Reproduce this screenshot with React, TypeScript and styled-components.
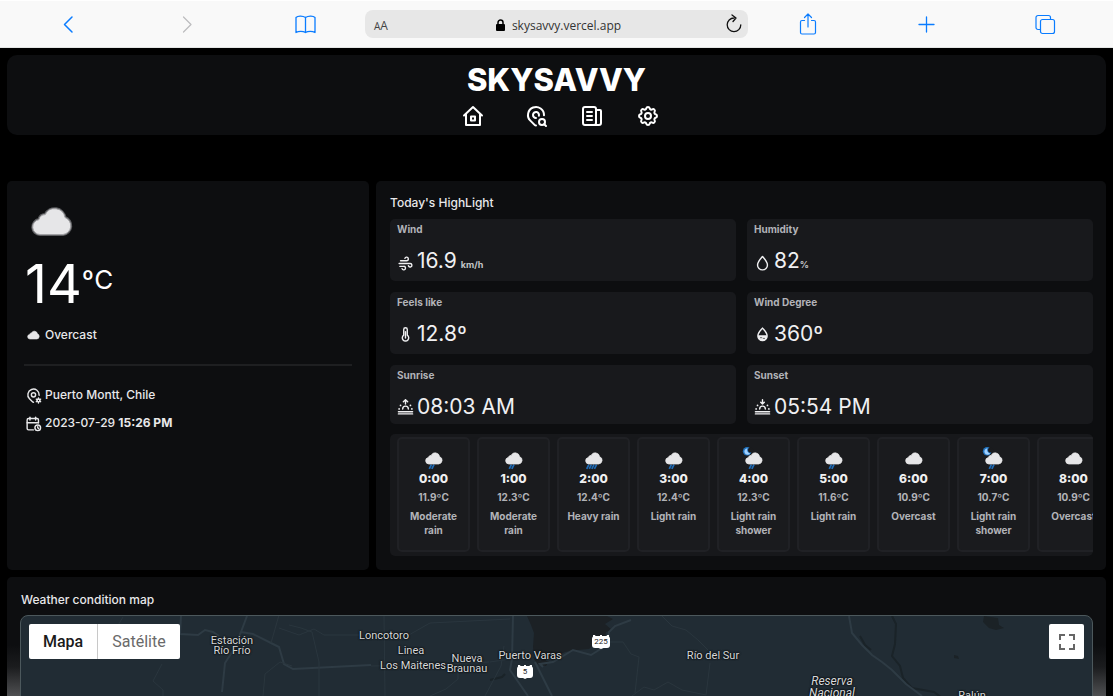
import React from "react";
import styled, { createGlobalStyle } from "styled-components";
import { TbMapPinSearch, TbSettings, TbMapPinCog, TbCalendarTime, TbWind } from "react-icons/tb";

const GlobalStyle = createGlobalStyle`
  * { box-sizing: border-box; }
  html, body, #root { height: 100%; }
  body { margin: 0; background: #000; color: #e8e8ea; font-family: Inter, "Liberation Sans", sans-serif; font-size: 12px; }
  h1, h2, h3, p, ul, ol { margin: 0; padding: 0; }
  li { list-style: none; }
  button { font: inherit; border: 0; padding: 0; background: none; cursor: pointer; }
  svg { display: block; flex: none; }
`;

const Shell = styled.div`
  display: flex;
  flex-direction: column;
  height: 100vh;
  overflow: hidden;
`;

/* ---------- browser bar ---------- */
const BrowserBar = styled.div`
  flex: none;
  display: grid;
  grid-template-columns: repeat(3, 1fr) minmax(0, 383px) repeat(3, 1fr);
  align-items: center;
  height: 48px;
  padding: 0 8px;
  background: #f9f9f9;
  border-top: 1px solid #fff;
  border-bottom: 1px solid #e4e6e5;
`;
const BarButton = styled.button<{ $muted?: boolean }>`
  display: flex;
  justify-content: center;
  color: ${(p) => (p.$muted ? "#bcbcbe" : "#0a7cff")};
`;
const AddressBox = styled.div`
  display: grid;
  grid-template-columns: 1fr auto 1fr;
  align-items: center;
  height: 28px;
  padding: 0 5px 0 9px;
  border-radius: 8px;
  background: #e7e7e7;
  color: #333;
  font-family: "Open Sans", "Noto Sans", sans-serif;
`;
const TextSize = styled.button`
  justify-self: start;
  padding-top: 2px;
  color: #444;
  font-size: 12px;
  small { font-size: 10px; }
`;
const Address = styled.span`
  display: flex;
  align-items: center;
  gap: 7px;
  padding-top: 2px;
  font-size: 12px;
`;
const Reload = styled.button`
  justify-self: end;
  color: #111;
`;

/* ---------- page ---------- */
const Page = styled.div`
  flex: 1;
  min-height: 0;
  overflow: hidden;
  padding: 7px;
`;
const Header = styled.header`
  display: flex;
  flex-direction: column;
  align-items: center;
  height: 80px;
  margin-bottom: 46px;
  padding-top: 5px;
  border-radius: 10px;
  background: #0d0e10;
`;
const Brand = styled.h1`
  font-size: 31px;
  line-height: 40px;
  font-weight: 800;
  color: #fff;
`;
const Nav = styled.nav`
  display: flex;
  align-items: center;
  gap: 32px;
  height: 24px;
  margin-top: 4px;
`;
const NavLink = styled.a<{ $pad?: number }>`
  padding: 0 ${(p) => p.$pad ?? 0}px;
  color: #fff;
`;
const Columns = styled.main`
  display: grid;
  grid-template-columns: minmax(0, 362fr) minmax(0, 730fr);
  gap: 7px;
`;
const Panel = styled.section`
  border-radius: 5px;
  background: #0d0e10;
`;
const Current = styled(Panel)`
  padding: 13px 17px;
`;
const Temperature = styled.p`
  display: flex;
  align-items: flex-start;
  margin: 7px 0 14px;
  padding-left: 1px;
  color: #fff;
  font-size: 54px;
  line-height: 54px;
  sup { font-size: 26px; line-height: 46px; vertical-align: baseline; }
`;
const Degree = styled.b`
  font-weight: 600;
`;
const Facts = styled.ul`
  display: grid;
  gap: 8px;
`;
const Fact = styled.div`
  display: flex;
  align-items: center;
  gap: 3px;
  padding-left: 1px;
  line-height: 20px;
  font-weight: 500;
  b { font-weight: 700; }
`;
const Divider = styled.hr`
  height: 2px;
  margin: 19px 0;
  border: 0;
  background: #1e1f21;
`;
const Highlights = styled(Panel)`
  padding: 12px 13px 14px 14px;
`;
const PanelTitle = styled.h2`
  margin-bottom: 6px;
  font-size: 12px;
  line-height: 20px;
  font-weight: 500;
`;
const Tiles = styled.div`
  display: grid;
  grid-template-columns: 1fr 1fr;
  grid-template-rows: 62px 62px 59px;
  gap: 11px;
`;
const Tile = styled.article`
  padding: 3px 7px;
  border-radius: 5px;
  background: #18191c;
`;
const TileLabel = styled.h3`
  margin-bottom: 11px;
  color: #b2b3b8;
  font-size: 10px;
  line-height: 14px;
  font-weight: 700;
`;
const TileValue = styled.p`
  display: flex;
  align-items: center;
  gap: 3px;
  color: #f0f0f2;
  font-size: 21px;
  line-height: 28px;
  font-weight: 400;
`;
const Unit = styled.small<{ $apart?: boolean }>`
  margin-left: ${(p) => (p.$apart ? 4 : 0)}px;
  color: #c4c5c8;
  font-size: 9px;
  font-weight: 700;
`;
const Hours = styled.ol`
  display: flex;
  gap: 7px;
  height: 122px;
  margin-top: 10px;
  padding: 3px 7px 4px;
  overflow: hidden;
  border-radius: 5px;
  background: #17181b;
`;
const Hour = styled.li`
  flex: none;
  display: flex;
  flex-direction: column;
  align-items: center;
  width: 73px;
  padding: 8px 2px;
  border: 2px solid #202125;
  border-radius: 5px;
  background: #1a1b1e;
  color: #b2b3b8;
  font-size: 10px;
  line-height: 14px;
  font-weight: 700;
  text-align: center;
  time { color: #efeff0; font-size: 12px; line-height: 16px; font-weight: 800; }
  span { margin: 3px 0 5px; }
  p { padding: 0 4px; }
`;

/* ---------- map ---------- */
const MapPanel = styled(Panel)`
  margin-top: 7px;
  padding: 13px 13px 0;
  background: linear-gradient(#0d0e10 68px, #1b1c1e 90px, #515254 120px, #515254);
`;
const MapTitle = styled(PanelTitle)`
  padding-left: 1px;
  margin-bottom: 5px;
`;
const MapCanvas = styled.div`
  position: relative;
  height: 400px;
  overflow: hidden;
  border: 1px solid #4c585c;
  border-radius: 8px;
  background: #212c34;
  font-family: Roboto, sans-serif;
`;
const MapDrawing = styled.svg`
  width: 100%;
  height: 100%;
`;
const Place = styled.span<{ $x: number; $y: number; $big?: boolean }>`
  position: absolute;
  left: ${(p) => p.$x}px;
  top: ${(p) => p.$y}px;
  transform: translate(-50%, -50%);
  color: #d6d8da;
  font-size: ${(p) => (p.$big ? 12 : 11)}px;
  font-style: ${(p) => (p.$big ? "italic" : "normal")};
  line-height: ${(p) => (p.$big ? 12 : 10)}px;
  text-align: center;
  white-space: pre;
  text-shadow: 0 0 2px #000, 0 0 2px #000;
`;
const Shield = styled.span<{ $x: number; $y: number }>`
  position: absolute;
  left: ${(p) => p.$x}px;
  top: ${(p) => p.$y}px;
  display: grid;
  place-items: center;
  transform: translate(-50%, -50%);
  color: #222;
  font-size: 8px;
  line-height: 12px;
  > * { grid-area: 1 / 1; }
  span { position: relative; }
`;
const MapTypes = styled.div`
  position: absolute;
  left: 8px;
  top: 8px;
  display: flex;
  height: 35px;
  border-radius: 2px;
  background: #fff;
`;
const MapType = styled.button<{ $active?: boolean }>`
  padding: 0 14px;
  color: ${(p) => (p.$active ? "#1a1a1a" : "#6a6a6a")};
  font-size: 16px;
  font-weight: ${(p) => (p.$active ? 500 : 400)};
  & + & { border-left: 1px solid #c8c8c8; }
`;
const FullScreen = styled.button`
  position: absolute;
  right: 8px;
  top: 8px;
  display: grid;
  place-items: center;
  width: 35px;
  height: 35px;
  border-radius: 2px;
  background: #fff;
  color: #666;
`;

/* ---------- icons ---------- */
const Line = ({ w = 24, h = w, box = "0 0 24 24", sw = 2, children }: { w?: number; h?: number; box?: string; sw?: number; children: React.ReactNode }) => (
  <svg width={w} height={h} viewBox={box} fill="none" stroke="currentColor" strokeWidth={sw} strokeLinecap="round" strokeLinejoin="round" aria-hidden="true">{children}</svg>
);

const CLOUD = "M9 27.5a7.5 7.5 0 0 1-1-14.9 6.5 6.5 0 0 1 6.2-5A10.5 10.5 0 0 1 34 10.500a8.800 8.800 0 0 1-2 17z";

const CloudArt = ({ size, ring, rain = 0, moon }: { size: number; ring?: boolean; rain?: number; moon?: boolean }) => (
  <svg width={size} height={size} viewBox="0 0 56 56" aria-hidden="true">
    {moon && (
      <g>
        <circle cx="12" cy="10" r="10" fill="#2273bd" />
        <path d="M13 3a7.500 7.500 0 1 0 6 12 8 8 0 0 1-6-12z" fill="#9fd0ff" />
        <circle cx="20" cy="7" r="6" fill="#1a1b1e" />
      </g>
    )}
    {Array.from({ length: rain }, (_, i) => (
      <path key={i} d={`M${28 - rain * 3 + i * 6} 41l-5 10`} stroke="#1f6cb8" strokeWidth="4" />
    ))}
    {ring && <path d={CLOUD} transform="translate(7 13)" fill="none" stroke="#5c5d60" strokeWidth="3" />}
    <path d={CLOUD} transform={ring ? "translate(7 13)" : "translate(7 12)"} fill="#e6e6e8" stroke={ring ? "#a2a2a5" : "#e6e6e8"} strokeWidth={ring ? 1 : 2} />
  </svg>
);

const SunHorizon = ({ down }: { down?: boolean }) => (
  <Line w={17} sw={2}>
    <path d="M2 21h20M2 18h20M8 14a4 4 0 0 1 8 0" />
    <path d={down ? "M12 1v6M9.500 4.500L12 7l2.500-2.500" : "M12 7V1M9 4l3-3 3 3"} />
    <path d="M5 9v.1M19 9v.1M3 14v.1M21 14v.1" strokeWidth="2.500" />
  </Line>
);

const highlightIcons: Record<string, React.ReactNode> = {
  Wind: <TbWind size={17} />,
  Humidity: <Line w={17} sw={2}><path d="M12 2c3.500 4 7 7.500 7 12a7 7 0 0 1-14 0C5 9.500 8.500 6 12 2z" /></Line>,
  "Feels like": <Line w={17} sw={2}><path d="M9.500 13V5a2.500 2.500 0 0 1 5 0v8a4.500 4.500 0 1 1-5 0z" /><path d="M12 8v9" /></Line>,
  "Wind Degree": <Line w={17} sw={2}><path d="M12 3c3 3.500 6.500 6.500 6.500 11a6.500 6.500 0 0 1-13 0c0-4.500 3.500-7.500 6.500-11z" /><path d="M6.500 14h11a5.500 5.500 0 0 1-11 0z" fill="currentColor" /><path d="M9 16.500h2M13 17.500h2" stroke="#333" strokeWidth="1" /></Line>,
  Sunrise: <SunHorizon />,
  Sunset: <SunHorizon down />,
};

const highlights = [
  { label: "Wind", value: "16.9", unit: "km/h" },
  { label: "Humidity", value: "82", unit: "%" },
  { label: "Feels like", value: "12.8", degree: true },
  { label: "Wind Degree", value: "360", degree: true },
  { label: "Sunrise", value: "08:03 AM" },
  { label: "Sunset", value: "05:54 PM" },
];

const hours = [
  { time: "0:00", temp: "11.9", text: "Moderate rain", rain: 2 },
  { time: "1:00", temp: "12.3", text: "Moderate rain", rain: 2 },
  { time: "2:00", temp: "12.4", text: "Heavy rain", rain: 4 },
  { time: "3:00", temp: "12.4", text: "Light rain", rain: 2 },
  { time: "4:00", temp: "12.3", text: "Light rain shower", rain: 2, moon: true },
  { time: "5:00", temp: "11.6", text: "Light rain", rain: 2 },
  { time: "6:00", temp: "10.9", text: "Overcast", rain: 0 },
  { time: "7:00", temp: "10.7", text: "Light rain shower", rain: 2, moon: true },
  { time: "8:00", temp: "10.9", text: "Overcast", rain: 0 },
];

const places = [
  { name: "Estación\nRío Frío", x: 211, y: 30 },
  { name: "Loncotoro", x: 363, y: 20 },
  { name: "Linea", x: 390, y: 35 },
  { name: "Los Maitenes", x: 392, y: 50 },
  { name: "Nueva\nBraunau", x: 446, y: 48 },
  { name: "Puerto Varas", x: 509, y: 40 },
  { name: "Río del Sur", x: 692, y: 40 },
  { name: "Ralún", x: 951, y: 80 },
];

const MapArt = () => (
  <MapDrawing viewBox="21 616 1071 398" preserveAspectRatio="xMinYMin slice" fill="none" aria-hidden="true">
    <path d="M527 616l4 9 3 8-1 14 1 8 10 8 3-4 8-2 10-5 13-2 11-1 8-7 8-5 1-5 6-2-7-6 8-5-6-3 3-5z" fill="#1c2125" />
    <path d="M984 616l14 2 1 7 5 3-8 2-7-2-6-6zM954 655l4 1 1 3-5-1z" fill="#1b2226" />
    <path d="M533 657l8 4 8 0-3 5-9-2z" fill="#1c2125" />
    <path d="M892 616l4 8-1 20-3 12 8 10 3 12 9 10 22 4 8 6M860 636l5 9 6 5M490 680l12-3 3-3" stroke="#1a2328" strokeWidth="2" />
    <path d="M849 616l3 17 10 12 10 10 10 7 10 8 14 14 16 12M181 616l-1 18 18 1 7-5 8 2 6 4M222 692l3-29 9-14 7-17 6-16M241 632l12 2 18 9 8 4 5 17 9 5 78-4M513 616l-1 43-2 11 18 26M543 667l-3-3 13-2 20-12 18 5 16-10 2-13 6-6 16-6M535 662l17 34" stroke="#2e3b44" strokeWidth="2" />
    <path d="M162 664l-9 17 10 9v6M263 696l2-22 15-12 12 4M271 643l8-28M289 625l12 3 11 4 7 30v34M279 628l20 7 15-6 10 6 36 0M384 616l1 80M400 640l30-17 80-4M371 666l60-1 58-3M490 662l20-3M485 696l16-30 3-20M430 696l16-7 12-10v-16l18-10M117 627l6-10M609 642h14l8 12 8 3-4 36M662 616l10 10 14 4 12 10 10 10M710 663l-4 32-24-5-14-8-14 8-10-3-12 9" stroke="#2a363e" strokeWidth="1" />
  </MapDrawing>
);

const RouteShield = ({ x, y, w, children }: { x: number; y: number; w: number; children: React.ReactNode }) => (
  <Shield $x={x} $y={y}>
    <svg width={w} height="14" viewBox={`0 0 ${w} 14`} aria-hidden="true">
      <rect y="1" width={w} height="12" rx="3" fill="#fff" />
      <path d={`M1 0h2l1 2H1zM${w / 2 - 1} 0h2v2h-2zM${w - 3} 0h2v2h-3zM4 12h${w - 8}l-${w / 2 - 4} 2z`} fill="#fff" />
    </svg>
    <span>{children}</span>
  </Shield>
);

export default function App() {
  return (
    <Shell>
      <GlobalStyle />
      <BrowserBar>
        <BarButton aria-label="Back"><Line w={24} sw={1.5}><path d="M16 5l-7.500 7.500 7.500 7.500" /></Line></BarButton>
        <BarButton aria-label="Forward" $muted><Line w={24} sw={1.2}><path d="M8.500 5l7.500 7.500-7.500 7.500" /></Line></BarButton>
        <BarButton aria-label="Bookmarks"><Line w={24} sw={1.3}><path d="M11.500 5.500C9 4 4 3.500 2 5.500v15c2.500-1.500 7-1.500 9.500 0 2.500-1.500 7-1.500 9.500 0v-15C19 3.500 14 4 11.500 5.500zM11.500 5.500v15" /></Line></BarButton>
        <AddressBox>
          <TextSize aria-label="Text size"><small>A</small>A</TextSize>
          <Address>
            <svg width="9" height="12" viewBox="0 0 9 12" aria-hidden="true"><rect y="5" width="9" height="7" rx="1" fill="#000" /><path d="M2 6V3.500a2.500 2.500 0 0 1 5 0V6" fill="none" stroke="#000" strokeWidth="1.500" /></svg>
            skysavvy.vercel.app
          </Address>
          <Reload aria-label="Reload"><Line w={18} h={20} box="0 0 18 20" sw={1.3}><path d="M9 4a6.800 6.800 0 1 0 6.800 6.800M7 1l4 3-3 3.500" /></Line></Reload>
        </AddressBox>
        <BarButton aria-label="Share"><Line w={24} sw={1.2}><path d="M8.500 8.500H6A1.500 1.500 0 0 0 4.500 10v10.500A1.500 1.500 0 0 0 6 22h12a1.500 1.500 0 0 0 1.500-1.500V10a1.500 1.500 0 0 0-1.500-1.500h-2.500M12 15V2M8.500 5.500L12 2l3.500 3.500" /></Line></BarButton>
        <BarButton aria-label="New tab"><Line w={24} sw={1.3}><path d="M11.500 5v15M4 12.500h15" /></Line></BarButton>
        <BarButton aria-label="Tabs"><Line w={24} sw={1.2}><rect x="6.500" y="7.500" width="14" height="14" rx="2" /><path d="M6.500 17.500H4a2 2 0 0 1-2-2V5.500a2 2 0 0 1 2-2h10.500a2 2 0 0 1 2 2v2" /></Line></BarButton>
      </BrowserBar>

      <Page>
        <Header>
          <Brand>SKYSAVVY</Brand>
          <Nav aria-label="Main">
            <NavLink href="#home" aria-label="Home" $pad={7}><Line><path d="M3 11.500L12 3l9 8.500M5 10v11h14V10" /><rect x="10" y="12.500" width="4" height="4" /></Line></NavLink>
            <NavLink href="#search" aria-label="Search places"><TbMapPinSearch size={24} /></NavLink>
            <NavLink href="#news" aria-label="News"><Line><rect x="3" y="3" width="13" height="18" rx="2" /><path d="M16 6h4a1 1 0 0 1 1 1v12a2 2 0 0 1-2 2h-5M7 8h5M7 12h5M7 16h5" /></Line></NavLink>
            <NavLink href="#settings" aria-label="Settings"><TbSettings size={24} /></NavLink>
          </Nav>
        </Header>

        <Columns>
          <Current>
            <CloudArt size={56} ring />
            <Temperature>14<sup><Degree>º</Degree>C</sup></Temperature>
            <Fact><CloudArt size={17} />Overcast</Fact>
            <Divider />
            <Facts>
              <Fact as="li"><TbMapPinCog size={17} />Puerto Montt, Chile</Fact>
              <Fact as="li"><TbCalendarTime size={17} /><span>2023-07-29 <b>15:26 PM</b></span></Fact>
            </Facts>
          </Current>

          <Highlights>
            <PanelTitle>Today's HighLight</PanelTitle>
            <Tiles>
              {highlights.map((h) => (
                <Tile key={h.label}>
                  <TileLabel>{h.label}</TileLabel>
                  <TileValue>
                    {highlightIcons[h.label]}
                    <span>{h.value}{h.degree && <Degree>º</Degree>}{h.unit && <Unit $apart={h.unit !== "%"}>{h.unit}</Unit>}</span>
                  </TileValue>
                </Tile>
              ))}
            </Tiles>
            <Hours>
              {hours.map((h) => (
                <Hour key={h.time}>
                  <CloudArt size={24} rain={h.rain} moon={h.moon} />
                  <time>{h.time}</time>
                  <span>{h.temp}ºC</span>
                  <p>{h.text}</p>
                </Hour>
              ))}
            </Hours>
          </Highlights>
        </Columns>

        <MapPanel>
          <MapTitle>Weather condition map</MapTitle>
          <MapCanvas>
            <MapArt />
            {places.map((p) => <Place key={p.name} $x={p.x} $y={p.y}>{p.name}</Place>)}
            <Place $x={811} $y={71} $big>{"Reserva\nNacional"}</Place>
            <RouteShield x={580} y={26} w={18}>225</RouteShield>
            <RouteShield x={504} y={56} w={16}>5</RouteShield>
            <MapTypes>
              <MapType $active>Mapa</MapType>
              <MapType>Satélite</MapType>
            </MapTypes>
            <FullScreen aria-label="Full screen">
              <svg width="16" height="16" viewBox="0 0 16 16" fill="none" stroke="currentColor" strokeWidth="2" aria-hidden="true"><path d="M1 6V1h5M10 1h5v5M15 10v5h-5M6 15H1v-5" /></svg>
            </FullScreen>
          </MapCanvas>
        </MapPanel>
      </Page>
    </Shell>
  );
}
